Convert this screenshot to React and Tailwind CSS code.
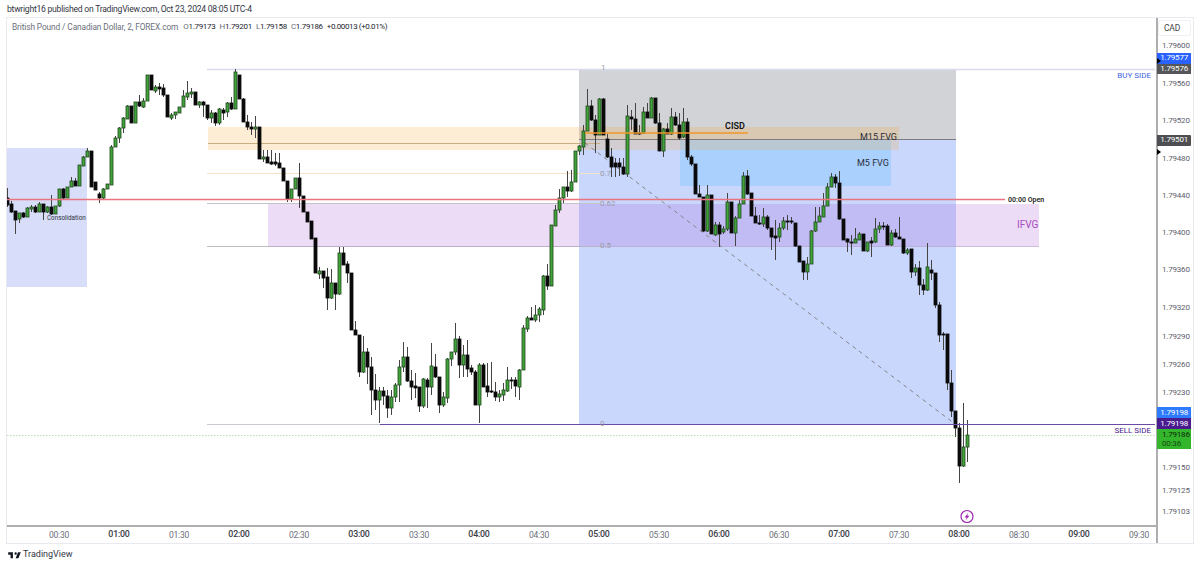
// App.jsx
import React from 'react';

// candles: [green?, body top, body bottom, high, low], pixel rows of the page, one bar every 4px from x=7
const bars = [
  [0,198,205,188,207],[0,204,212,201,213],[0,211,220,211,234],[1,213,219,213,223],[0,213,217,212,218],[1,208,217,207,217],[1,207,209,205,212],[0,207,212,205,213],
  [1,204,212,202,212],[0,204,212,204,220],[1,207,212,206,213],[0,207,214,195,215],[1,206,214,206,214],[1,189,206,189,207],[0,189,198,188,199],[1,187,198,187,198],
  [1,181,187,177,187],[0,181,186,178,186],[1,165,186,165,186],[1,157,166,156,166],[1,151,157,148,157],[0,151,187,151,187],[0,182,190,182,190],[0,194,198,192,203],
  [1,189,198,188,200],[1,184,189,184,189],[1,147,185,145,185],[1,138,147,136,147],[1,128,138,127,143],[1,118,128,117,133],[1,106,119,105,119],[0,106,123,106,123],
  [1,102,123,102,123],[0,102,106,95,107],[1,101,107,98,108],[1,75,101,75,101],[0,75,90,75,90],[1,87,91,85,93],[0,87,89,83,95],[0,88,95,84,97],
  [0,95,117,95,117],[1,115,118,113,120],[1,112,115,112,119],[1,107,113,107,113],[1,96,107,90,107],[1,93,97,81,100],[1,92,94,88,98],[0,92,105,92,105],
  [1,102,105,101,108],[0,102,105,101,117],[0,105,118,105,120],[1,113,118,110,123],[0,113,123,112,126],[1,109,123,108,125],[0,110,113,108,120],[1,103,112,102,117],
  [0,103,109,97,110],[1,72,109,69,109],[0,75,99,75,99],[0,99,122,98,122],[0,122,127,115,130],[0,127,129,122,135],[1,127,129,116,138],[0,127,159,127,159],
  [1,157,159,150,162],[0,157,163,150,163],[0,162,164,150,165],[0,162,164,153,166],[0,163,168,153,168],[0,168,181,168,181],[0,181,199,181,202],[1,189,199,189,202],
  [1,178,189,178,189],[0,178,196,163,208],[0,196,212,196,212],[0,212,222,212,222],[0,221,239,221,239],[0,238,273,238,273],[1,271,274,267,279],[0,271,278,271,288],
  [0,277,298,268,310],[1,283,298,269,299],[0,283,294,283,310],[1,253,294,247,295],[0,253,265,247,265],[0,264,273,261,283],[0,273,330,273,330],[0,330,335,321,335],
  [0,335,372,335,377],[1,352,372,336,373],[0,352,367,348,384],[0,367,390,357,415],[0,390,400,374,410],[1,391,400,387,423],[0,391,396,387,405],[0,396,408,390,418],
  [1,397,408,390,415],[1,385,397,383,402],[1,367,385,360,402],[1,357,367,342,372],[0,357,381,347,382],[0,381,387,370,400],[0,386,388,373,398],[0,387,406,387,412],
  [1,379,406,378,408],[0,380,387,378,408],[1,366,387,343,395],[0,367,377,354,378],[0,377,405,377,413],[1,397,405,392,407],[1,359,398,358,403],[1,352,359,352,366],
  [1,339,352,323,355],[0,339,365,336,378],[1,355,365,345,377],[0,355,369,340,377],[0,368,372,365,375],[0,372,405,370,405],[1,365,405,363,423],[0,365,387,363,387],
  [0,386,392,363,397],[0,391,392,362,393],[0,392,397,382,401],[1,394,397,390,402],[1,390,395,383,401],[1,380,391,367,392],[0,380,381,377,389],[0,380,386,377,397],
  [1,370,387,369,400],[1,328,370,325,370],[1,318,329,316,332],[0,318,320,307,320],[1,315,320,305,322],[1,309,315,307,322],[1,276,310,275,315],[0,276,286,264,290],
  [1,225,286,225,286],[1,210,226,205,226],[1,198,210,189,213],[1,187,198,187,203],[0,187,191,171,197],[1,182,191,170,192],[1,151,182,151,182],[1,146,151,145,155],
  [1,131,147,125,155],[1,106,131,89,131],[0,106,120,100,121],[0,120,135,115,153],[1,99,135,98,135],[0,99,135,98,135],[0,139,157,134,158],[0,157,167,148,177],
  [0,163,167,158,177],[0,163,167,158,176],[0,167,174,158,175],[1,116,174,105,177],[0,117,119,110,130],[0,119,134,103,134],[0,133,134,125,135],[1,112,133,107,134],
  [0,112,118,103,118],[1,98,118,97,118],[0,98,123,98,124],[0,123,151,113,151],[1,129,151,128,157],[0,129,134,123,134],[1,117,134,108,135],[0,117,125,112,126],
  [0,125,138,113,140],[1,122,137,108,138],[0,122,157,118,160],[0,157,164,155,166],[0,164,194,164,194],[0,194,197,185,197],[0,197,231,197,232],[1,195,231,185,232],
  [0,195,234,195,234],[1,225,235,222,236],[0,225,234,222,247],[1,229,232,226,234],[1,202,229,193,231],[0,202,233,202,233],[1,218,233,216,246],[1,204,218,200,218],
  [1,176,204,172,204],[0,176,194,170,195],[0,193,216,193,216],[0,216,223,207,223],[0,223,224,215,225],[1,217,224,208,227],[0,217,228,215,230],[0,228,237,228,250],
  [0,236,238,220,260],[1,228,237,223,242],[1,221,228,217,230],[0,221,222,215,230],[0,221,222,217,224],[0,223,246,223,247],[0,246,262,246,262],[0,261,272,261,280],
  [1,264,272,257,280],[1,231,264,230,264],[1,222,231,207,232],[1,216,222,207,222],[1,206,217,193,217],[1,187,206,183,206],[1,177,187,173,187],[0,177,183,174,188],
  [0,183,219,171,220],[0,219,240,219,240],[0,239,242,238,252],[0,242,243,235,255],[1,239,243,228,243],[1,234,240,232,240],[0,234,251,234,251],[1,242,251,242,252],
  [0,241,243,237,257],[1,229,242,218,243],[1,226,229,222,233],[0,226,227,222,230],[0,226,245,224,245],[1,233,245,230,246],[0,233,237,229,238],[0,237,239,217,239],
  [0,239,253,239,254],[1,250,253,248,255],[0,249,272,249,278],[1,268,272,264,276],[0,268,285,261,295],[0,285,290,279,295],[1,267,290,243,291],[0,270,273,260,280],
  [0,273,305,273,308],[0,305,335,302,342],[0,334,335,332,350],[0,334,383,334,390],[0,383,411,370,417],[0,411,428,411,437],[0,428,466,423,483],[1,447,466,403,467],
  [1,435,447,420,462],
];

const hours = ['00:30','01:00','01:30','02:00','02:30','03:00','03:30','04:00','04:30','05:00','05:30','06:00','06:30','07:00','07:30','08:00','08:30','09:00','09:30'];

const ticks = [
  ['1.79600',46],['1.79560',83.5],['1.79520',121],['1.79480',158.5],['1.79440',196],['1.79400',233],['1.79360',270],
  ['1.79320',308],['1.79290',336.5],['1.79260',365],['1.79230',393],['1.79150',468],['1.79125',491],['1.79103',512],
];

const Candles = () => (
  <>
    {bars.map((b, i) => {
      const x = 7 + i * 4;
      const [up, top, bottom, hi, lo] = b;
      return (
        <g key={i}>
          <line x1={x + 0.5} x2={x + 0.5} y1={hi} y2={lo} stroke="#444" strokeWidth="1" />
          <rect
            x={x - 1}
            y={top}
            width="3"
            height={Math.max(bottom - top, 1)}
            fill={up ? '#3fa33a' : '#0a0a0a'}
            stroke={up ? '#23461f' : '#0a0a0a'}
            strokeWidth="0.8"
          />
        </g>
      );
    })}
  </>
);

const ChartDrawing = () => (
  <svg viewBox="7 18 1148 507" width="1148" height="507" className="absolute left-0 top-0">
    {/* zones */}
    <rect x="7" y="148" width="80" height="139" fill="#d8def9" />
    <rect x="579" y="69" width="377" height="70" fill="#d2d3d6" />
    <rect x="579" y="139" width="377" height="285" fill="#c9d7fc" />
    <rect x="680" y="139" width="211" height="47" fill="#a4d0fd" fillOpacity="0.85" />
    <rect x="208" y="127" width="691" height="23" fill="#f7a629" fillOpacity="0.2" />
    <rect x="268" y="204" width="771" height="43" fill="#a64fd0" fillOpacity="0.2" />

    {/* levels */}
    <line x1="207" x2="1155" y1="69.5" y2="69.5" stroke="#d9daec" strokeWidth="1.4" />
    <line x1="579" x2="956" y1="139.5" y2="139.5" stroke="#7c7c80" />
    <line x1="208" x2="600" y1="143.5" y2="143.5" stroke="#c9ae84" />
    <line x1="207" x2="600" y1="173.5" y2="173.5" stroke="#f6e3c5" strokeWidth="1.2" />
    <line x1="207" x2="600" y1="203.5" y2="203.5" stroke="#c4c4c8" />
    <line x1="207" x2="600" y1="246.5" y2="246.5" stroke="#bdbdc2" />
    <line x1="268" x2="1039" y1="246.5" y2="246.5" stroke="#b9a6c8" strokeOpacity="0.6" />
    <line x1="207" x2="380" y1="424.5" y2="424.5" stroke="#c9c9d2" />
    <line x1="7" x2="1155" y1="435.5" y2="435.5" stroke="#b5e3b0" strokeWidth="1.2" strokeDasharray="1.5 1.5" />
    <line x1="585" x2="955" y1="143" y2="424" stroke="#85858c" strokeDasharray="4 4" />

    <Candles />

    <line x1="7" x2="1005" y1="199.5" y2="199.5" stroke="#ea7380" strokeWidth="1.7" />
    <line x1="380" x2="1155" y1="424.5" y2="424.5" stroke="#6a4ba6" />
    <line x1="585" x2="748" y1="133" y2="133" stroke="#f0972a" strokeWidth="1.4" />

    {/* fib numbers */}
    <g fill="#9c9ca8" fontSize="8">
      <text x="600" y="176">0.7</text>
      <text x="600" y="206">0.62</text>
      <text x="600" y="248">0.5</text>
      <text x="600" y="426">0</text>
      <text x="601" y="70">1</text>
    </g>

    {/* drawing labels */}
    <text x="47" y="220" fontSize="6.3" fill="#2a2e39">Consolidation</text>
    <text x="1008" y="201.5" fontSize="7" fontWeight="600" fill="#1f1f24">00:00 Open</text>
    <text x="725" y="129" fontSize="9" fontWeight="600" fill="#111">CISD</text>
    <text x="860" y="140" fontSize="9" fill="#2a2e39">M15 FVG</text>
    <text x="857" y="166" fontSize="9" fill="#2a2e39">M5 FVG</text>
    <text x="1017" y="228" fontSize="10" fill="#a64cc0">IFVG</text>
    <text x="1151" y="78" fontSize="8" textAnchor="end" fill="#3f66e0">BUY SIDE</text>
    <text x="1151" y="433" fontSize="8" textAnchor="end" fill="#4a1a8f">SELL SIDE</text>

    {/* script alert */}
    <circle cx="967" cy="516.5" r="6" fill="#fff" stroke="#9c27b0" strokeWidth="1.2" />
    <path d="M968.4 512.6 964.6 517.4h2.2l-1.2 3.2 3.8-4.8h-2.2z" fill="#9c27b0" />
  </svg>
);

const Legend = () => (
  <div className="absolute left-[5px] top-[3px] flex items-center text-[8px] leading-3 tracking-[-0.3px] text-[#6b6f7a]">
    <span className="text-[8.3px] tracking-[-0.1px]">British Pound / Canadian Dollar, 2, FOREX.com</span>
    <span className="ml-[5px]">O<span className="text-[#23262e]">1.79173</span></span>
    <span className="ml-[4px]">H<span className="text-[#23262e]">1.79201</span></span>
    <span className="ml-[4px]">L<span className="text-[#23262e]">1.79158</span></span>
    <span className="ml-[4px]">C<span className="text-[#23262e]">1.79186</span></span>
    <span className="ml-[4px] tracking-[-0.4px] text-[#23262e]">+0.00013 (+0.01%)</span>
  </div>
);

const PriceAxis = () => (
  <div className="relative w-[37px] shrink-0 border-l-2 border-[#aeaeb0]">
    <div className="absolute left-[0px] top-[2px] flex h-[16px] w-[33px] items-center rounded-[2px] border border-[#f0f0f3] pl-[5px] text-[8.5px] tracking-[-0.2px] text-[#444]">
      CAD
    </div>
    {ticks.map(([label, y]) => (
      <span
        key={label}
        className="absolute left-[4px] -translate-y-1/2 text-[8px] leading-none tracking-[-0.2px] text-[#5d606b]"
        style={{ top: y - 18 }}
      >
        {label}
      </span>
    ))}

    <div className="absolute left-[-1px] top-[35px] flex w-[34px] flex-col text-[8px] leading-none tracking-[-0.2px] text-white">
      <div className="flex h-[10.5px] items-center justify-end pr-[3px] bg-[#2962ff]">1.79577</div>
      <div className="flex h-[10.5px] items-center justify-end pr-[3px] bg-[#555659]">1.79576</div>
    </div>
    <div className="absolute left-[-1px] top-[117px] flex h-[10.5px] w-[34px] items-center justify-end rounded-r-[1px] bg-[#4e4f52] pr-[3px] text-[8px] leading-none tracking-[-0.2px] text-white">
      1.79501
    </div>
    <div className="absolute left-[-1px] top-[40px] h-0 w-0 border-y-[3.5px] border-l-[4px] border-y-transparent border-l-black" />
    <div className="absolute left-[-1px] top-[131px] h-0 w-0 border-y-[3.5px] border-l-[4px] border-y-transparent border-l-black" />

    <div className="absolute left-[-1px] top-[389px] flex w-[34px] flex-col text-[8px] leading-none tracking-[-0.2px]">
      <div className="flex h-[11px] items-center justify-end pr-[3px] bg-[#2f7bff] text-white">1.79198</div>
      <div className="flex h-[11px] items-center justify-end pr-[3px] bg-[#4a1a8f] text-white">1.79198</div>
      <div className="flex h-[20px] flex-col items-start justify-center gap-[1px] bg-[#33b52c] pl-[5px] text-[#0b2a08]">
        <span>1.79186</span>
        <span className="text-[#174d12]">00:36</span>
      </div>
    </div>
  </div>
);

const TimeAxis = () => (
  <div className="flex h-[18px] items-center border-t-2 border-[#aeaeb0] pl-[22px]">
    {hours.map((h) => (
      <span
        key={h}
        className={`w-[60px] shrink-0 text-center ${h.endsWith(':00') ? 'text-[8.8px] font-medium tracking-[-0.2px] text-[#3a3d46]' : 'text-[8.5px] tracking-[-0.25px] text-[#6b6f7a]'}`}
      >
        {h}
      </span>
    ))}
  </div>
);

const App = () => (
  <div className="h-[566px] w-[1200px] overflow-hidden bg-white font-['Roboto',sans-serif]">
    <div className="flex h-[17px] items-center pl-[7px] pt-[2px] text-[8.6px] tracking-[-0.25px] text-[#33363f]">
      btwright16 published on TradingView.com, Oct 23, 2024 08:05 UTC-4
    </div>

    <div className="ml-[6px] flex h-[527px] w-[1188px] border border-[#e9e9ef]">
      <div className="flex min-w-0 flex-1 flex-col">
        <div className="relative h-[507px] overflow-hidden">
          <ChartDrawing />
          <Legend />
        </div>
        <TimeAxis />
      </div>
      <PriceAxis />
    </div>

    <div className="flex h-[22px] items-center gap-[1px] pl-[7px] text-[9px] text-[#33363f]">
      <svg viewBox="0 0 36 28" width="15" height="11" fill="#131722">
        <path d="M14 6H2v6h6v9h6V6Zm14 15h-7l6-15h7l-6 15Zm-7-9a3 3 0 1 0 0-6 3 3 0 0 0 0 6Z" />
      </svg>
      <span>TradingView</span>
    </div>
  </div>
);

export default App;
